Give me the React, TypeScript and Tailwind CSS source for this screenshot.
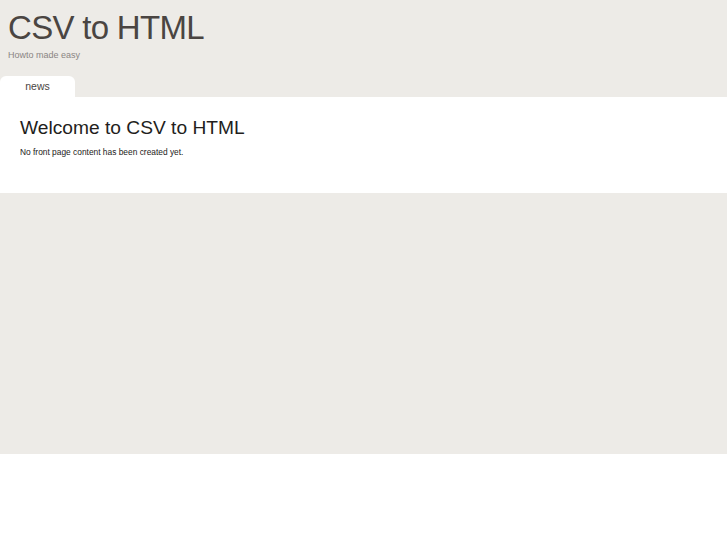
export default function App() {
  return (
    <div className="min-h-screen bg-white font-['Liberation_Sans',Arial,sans-serif]">
      {/* header */}
      <div className="bg-[#edebe7]">
        <div className="px-2 pt-[6px]">
          <h1 className="text-[33px] leading-[44px] text-[#4a4542] tracking-[-0.7px]">CSV to HTML</h1>
          <p className="-mt-[1px] text-[9px] leading-[12px] text-[#8a8583]">Howto made easy</p>
        </div>
        <div className="mt-[15px] flex">
          <a className="w-[75px] h-[21px] rounded-t-[6px] bg-white flex items-center justify-center text-[10.5px] text-[#4a4542]">
            news
          </a>
        </div>
      </div>

      {/* content */}
      <div className="bg-white px-5 pt-[19px] h-[96px]">
        <h2 className="text-[19.2px] leading-[24px] text-[#231e1c]">Welcome to CSV to HTML</h2>
        <p className="mt-[6px] text-[8.4px] leading-[12px] text-[#1c1a19]">No front page content has been created yet.</p>
      </div>

      {/* footer band */}
      <div className="bg-[#edebe7] h-[261px]" />
    </div>
  );
}
